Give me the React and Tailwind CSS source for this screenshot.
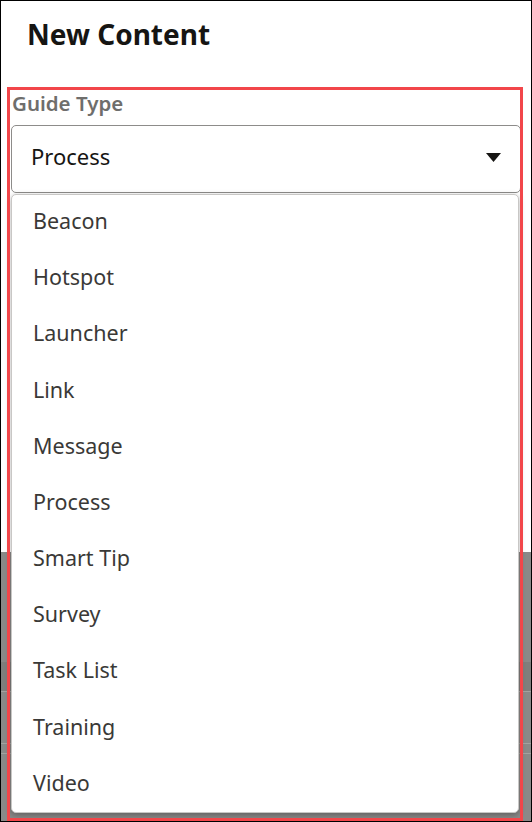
import React from "react";

const guideTypes = [
  "Beacon",
  "Hotspot",
  "Launcher",
  "Link",
  "Message",
  "Process",
  "Smart Tip",
  "Survey",
  "Task List",
  "Training",
  "Video",
];

const App = () => {
  return (
    <div className="relative w-[532px] h-[822px] overflow-hidden border border-black bg-white font-['Noto_Sans',sans-serif]">
      <div className="flex flex-col h-full">
        {/* dialog */}
        <div className="h-[551px] bg-white flex flex-col">
          <h1 className="pl-[26px] pt-[14px] text-[28px] font-bold leading-[38px] text-[#161513]">
            New Content
          </h1>
          <div className="pl-[10px] pt-[36px]">
            <div className="pl-[1px] text-[20.5px] font-semibold leading-[28px] text-[#6f6e6c]">
              Guide Type
            </div>
            <div className="mt-[8px] mr-[10px] h-[68px] flex items-center justify-between rounded-[5px] border border-[#8d8c8a] pl-[19px] pr-[19px] pb-[6px]">
              <span className="text-[22px] leading-[30px] text-[#161513]">Process</span>
              <svg width="15" height="9" viewBox="0 0 15 9" className="mt-[3px]">
                <path d="M0 0 H15 L7.5 9 Z" fill="#161513" />
              </svg>
            </div>
          </div>
        </div>
        {/* dimmed page behind */}
        <div className="flex-1 flex flex-col bg-[#8a8988]">
          <div className="h-[110px]" />
          <div className="h-[30px] bg-[#7f7e7c] border-b border-[#a3a2a0]" />
          <div className="h-[52px] border-b border-[#a3a2a0]" />
          <div className="h-[10px] border-b border-[#a3a2a0]" />
        </div>
      </div>

      {/* listbox */}
      <div className="absolute left-[10px] right-[12px] top-[193px] h-[619px] rounded-[5px] border border-[#c8c7c5] bg-white shadow-[0_2px_6px_rgba(0,0,0,0.3)]">
        <ul className="flex flex-col">
          {guideTypes.map((t) => (
            <li
              key={t}
              className="h-[56.2px] flex items-center pl-[21px] pb-[4px] text-[21.5px] text-[#3a3937]"
            >
              {t}
            </li>
          ))}
        </ul>
      </div>

      {/* annotation highlight */}
      <div className="absolute left-[6px] top-[86px] w-[516px] h-[734px] border-[3px] border-[#f2464a] pointer-events-none" />
    </div>
  );
};

export default App;
